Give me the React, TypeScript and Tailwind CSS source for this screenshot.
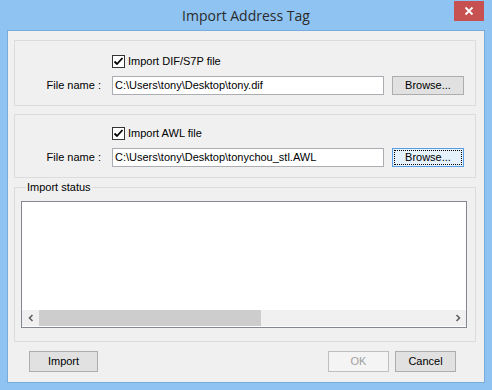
import React from 'react';

const font = { fontFamily: '"Liberation Sans", Arial, sans-serif' };

const CheckBox: React.FC<{ label: string }> = ({ label }) => (
    <label className="flex items-center gap-[3px] h-[13px]">
        <span className="w-[13px] h-[13px] border border-[#333333] bg-white flex items-center justify-center">
            <svg width="11" height="11" viewBox="0 0 11 11">
                <path d="M1.5 5.5 L4 8 L9.5 2" fill="none" stroke="#000" strokeWidth="1.8" />
            </svg>
        </span>
        <span>{label}</span>
    </label>
);

const FileRow: React.FC<{ path: string; focused?: boolean }> = ({ path, focused }) => (
    <div className="flex items-center mt-[8px]">
        <span className="w-[86px] text-right">File name :</span>
        <div className="ml-[11px] w-[272px] h-[19px] border border-[#abadb3] bg-white px-[2px] flex items-center">
            {path}
        </div>
        {focused ? (
            <button className="ml-[8px] w-[72px] h-[19px] border border-[#569de5] bg-[#e5f1fb] p-[1px]">
                <span className="flex items-center justify-center w-full h-full border border-dotted border-black">Browse...</span>
            </button>
        ) : (
            <button className="ml-[8px] w-[72px] h-[19px] border border-[#adadad] bg-[#e1e1e1]">Browse...</button>
        )}
    </div>
);

const ScrollBar: React.FC = () => (
    <div className="mt-auto mb-[1px] h-[16px] flex bg-[#f0f0f0]">
        <div className="w-[17px] flex items-center justify-center">
            <svg width="8" height="8" viewBox="0 0 8 8">
                <path d="M5.5 1 L2.5 4 L5.5 7" fill="none" stroke="#606060" strokeWidth="1.6" />
            </svg>
        </div>
        <div className="w-[222px] bg-[#cdcdcd]" />
        <div className="flex-1" />
        <div className="w-[17px] flex items-center justify-center">
            <svg width="8" height="8" viewBox="0 0 8 8">
                <path d="M2.5 1 L5.5 4 L2.5 7" fill="none" stroke="#606060" strokeWidth="1.6" />
            </svg>
        </div>
    </div>
);

const App: React.FC = () => {
    return (
        <div className="w-[492px] h-[390px] bg-[#8fc3f2] flex flex-col px-[7px] pb-[7px] text-[11px] text-black" style={font}>
            <div className="h-[30px] flex items-start relative shrink-0">
                <div className="flex-1 text-center text-[14px] leading-[20px] pt-[6px] text-[#2b2b2b]" style={{ fontFamily: '"Open Sans", "Noto Sans", sans-serif' }}>
                    Import Address Tag
                </div>
                <button className="absolute right-[1px] top-[1px] w-[30px] h-[20px] bg-[#c75050] flex items-center justify-center">
                    <svg width="10" height="10" viewBox="0 0 10 10">
                        <path d="M1.5 1.5 L8.5 8.5 M8.5 1.5 L1.5 8.5" stroke="#fff" strokeWidth="1.8" />
                    </svg>
                </button>
            </div>
            <div className="flex-1 border border-[#78acdc] bg-[#f0f0f0] flex flex-col pl-[6px] pr-[8px] pt-[9px]">
                <div className="h-[66px] border border-[#dcdcdc] pt-[14px] pl-[97px]">
                    <CheckBox label="Import DIF/S7P file" />
                    <div className="-ml-[97px]">
                        <FileRow path="C:\Users\tony\Desktop\tony.dif" />
                    </div>
                </div>
                <div className="mt-[8px] h-[64px] border border-[#dcdcdc] pt-[12px] pl-[97px]">
                    <CheckBox label="Import AWL file" />
                    <div className="-ml-[97px]">
                        <FileRow path="C:\Users\tony\Desktop\tonychou_stl.AWL" focused />
                    </div>
                </div>
                <fieldset className="mt-[3px] border border-[#dcdcdc] pl-[6px] pr-[8px] pb-[13px]">
                    <legend className="ml-[5px] px-[1px] leading-[13px]">Import status</legend>
                    <div className="mt-[7px] h-[127px] border border-[#828790] bg-white flex flex-col">
                        <ScrollBar />
                    </div>
                </fieldset>
                <div className="mt-[9px] flex pl-[15px] pr-[20px]">
                    <button className="w-[69px] h-[21px] border border-[#adadad] bg-[#e1e1e1]">Import</button>
                    <div className="flex-1" />
                    <button className="w-[61px] h-[21px] border border-[#bfbfbf] bg-[#f4f4f4] text-[#a0a0a0]" disabled>OK</button>
                    <button className="ml-[6px] w-[61px] h-[21px] border border-[#adadad] bg-[#e1e1e1]">Cancel</button>
                </div>
            </div>
        </div>
    );
};

export default App;
